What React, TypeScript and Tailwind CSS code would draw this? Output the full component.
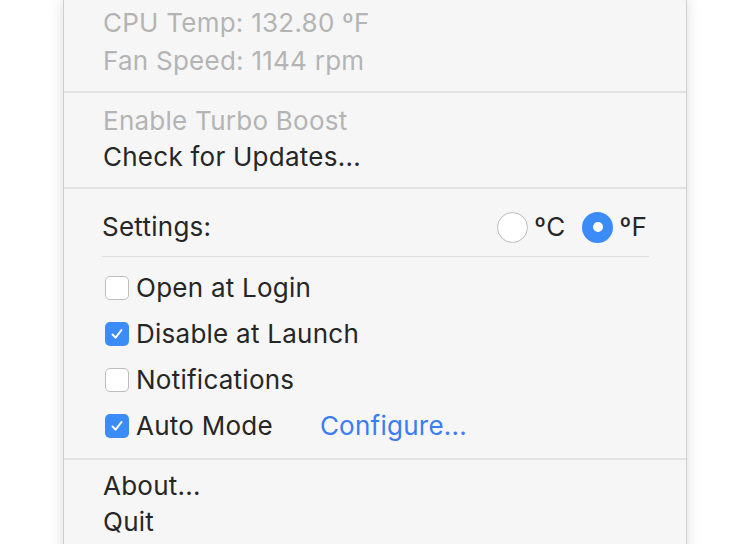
import { ReactNode } from 'react';

const font = { fontFamily: 'Inter, "Noto Sans", sans-serif' };

function Separator() {
  return <div className="h-[2px] bg-[#e2e2e2]" />;
}

function MenuRow({ children, disabled, h = 'h-[38px]' }: { children: ReactNode; disabled?: boolean; h?: string }) {
  return (
    <div className={`${h} flex items-center pl-[39px] ${disabled ? 'text-[#b4b4b4]' : 'text-[#262626]'}`}>
      {children}
    </div>
  );
}

function Checkbox({ checked }: { checked?: boolean }) {
  if (checked) {
    return (
      <span className="w-[24px] h-[24px] rounded-[5px] bg-[#3b8cf6] flex items-center justify-center shrink-0">
        <svg width="14" height="14" viewBox="0 0 14 14" fill="none">
          <path d="M2.5 7.5 L5.6 10.6 L11.5 3" stroke="white" strokeWidth="2" strokeLinecap="round" strokeLinejoin="round" />
        </svg>
      </span>
    );
  }
  return <span className="w-[24px] h-[24px] rounded-[5px] bg-white border border-[#bdbdbd] shrink-0" />;
}

function CheckRow({ label, checked, extra }: { label: string; checked?: boolean; extra?: ReactNode }) {
  return (
    <div className="h-[46px] flex items-center text-[#262626]">
      <Checkbox checked={checked} />
      <span className="ml-[7px]">{label}</span>
      {extra}
    </div>
  );
}

function Radio({ checked }: { checked?: boolean }) {
  if (checked) {
    return (
      <span className="w-[31px] h-[31px] rounded-full bg-[#3b8cf6] flex items-center justify-center">
        <span className="w-[10px] h-[10px] rounded-full bg-white" />
      </span>
    );
  }
  return <span className="w-[31px] h-[31px] rounded-full bg-white border border-[#bcbcbc]" />;
}

export default function App() {
  return (
    <div className="w-[750px] h-[544px] bg-white overflow-hidden flex justify-center" style={font}>
      <div className="w-[624px] h-[560px] -mt-px bg-[#f6f6f6] border border-[#cfcfcf] shadow-[0_0_14px_rgba(0,0,0,0.14)] text-[26px] leading-none tracking-[0.25px]">
        <div className="pt-[4px] pb-[11px]">
          <MenuRow disabled>CPU Temp: 132.80 ºF</MenuRow>
          <MenuRow disabled>Fan Speed: 1144 rpm</MenuRow>
        </div>
        <Separator />
        <div className="pt-[10px] pb-[12px]">
          <MenuRow disabled h="h-[36px]">Enable Turbo Boost</MenuRow>
          <MenuRow h="h-[36px]">Check for Updates...</MenuRow>
        </div>
        <Separator />
        <div className="pt-[18px] pb-[9px] pl-[38px] pr-[37px]">
          <div className="h-[40px] flex items-center justify-between text-[#262626]">
            <span>Settings:</span>
            <div className="flex items-center">
              <Radio />
              <span className="ml-[6px]">ºC</span>
              <span className="ml-[17px]"><Radio checked /></span>
              <span className="ml-[6px] mr-[2px]">ºF</span>
            </div>
          </div>
          <div className="mt-[9px] mb-[8px] h-px bg-[#dedede]" />
          <div className="pl-[3px]">
            <CheckRow label="Open at Login" />
            <CheckRow label="Disable at Launch" checked />
            <CheckRow label="Notifications" />
            <CheckRow
              label="Auto Mode"
              checked
              extra={<span className="ml-[47px] text-[#3a7cf2]">Configure...</span>}
            />
          </div>
        </div>
        <Separator />
        <div className="pt-[8px]">
          <MenuRow h="h-[36px]">About...</MenuRow>
          <MenuRow h="h-[36px]">Quit</MenuRow>
        </div>
      </div>
    </div>
  );
}
